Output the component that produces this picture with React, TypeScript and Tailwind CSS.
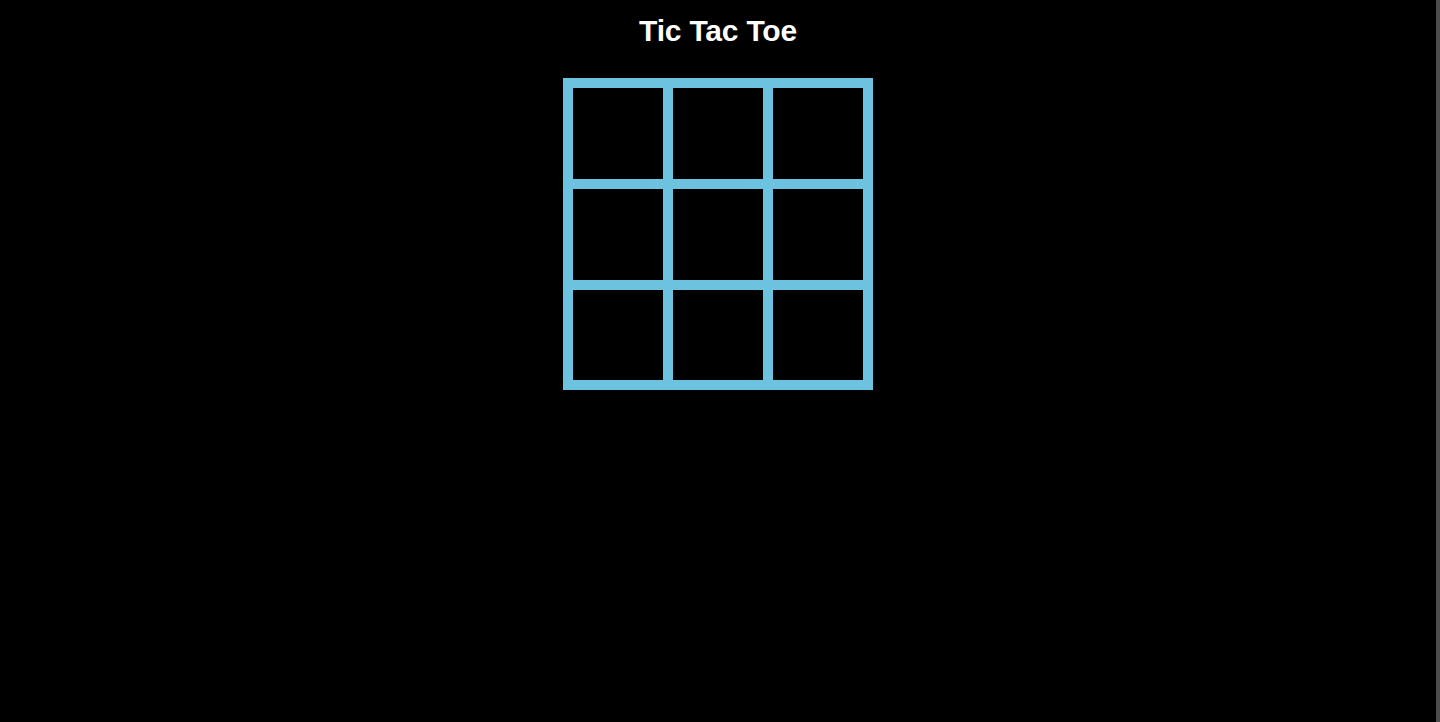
import React from "react";

const cells = [0, 1, 2, 3, 4, 5, 6, 7, 8];

export default function App() {
  return (
    <div className="flex min-h-screen h-[722px] bg-black">
      <div className="flex-1 flex flex-col items-center">
        <h1
          className="pt-[14px] text-[30px] leading-[34px] font-bold text-white tracking-[-0.2px]"
          style={{ fontFamily: '"Liberation Sans", Arial, sans-serif' }}
        >
          Tic Tac Toe
        </h1>
        <div className="mt-[30px] grid grid-cols-[90px_90px_90px] grid-rows-[91px_91px_90px] gap-[10px] p-[10px] bg-[#6cc2df]">
          {cells.map((i) => (
            <button key={i} className="bg-black" />
          ))}
        </div>
      </div>
      <div className="w-[4px] bg-[#4b4d4d]" />
    </div>
  );
}
